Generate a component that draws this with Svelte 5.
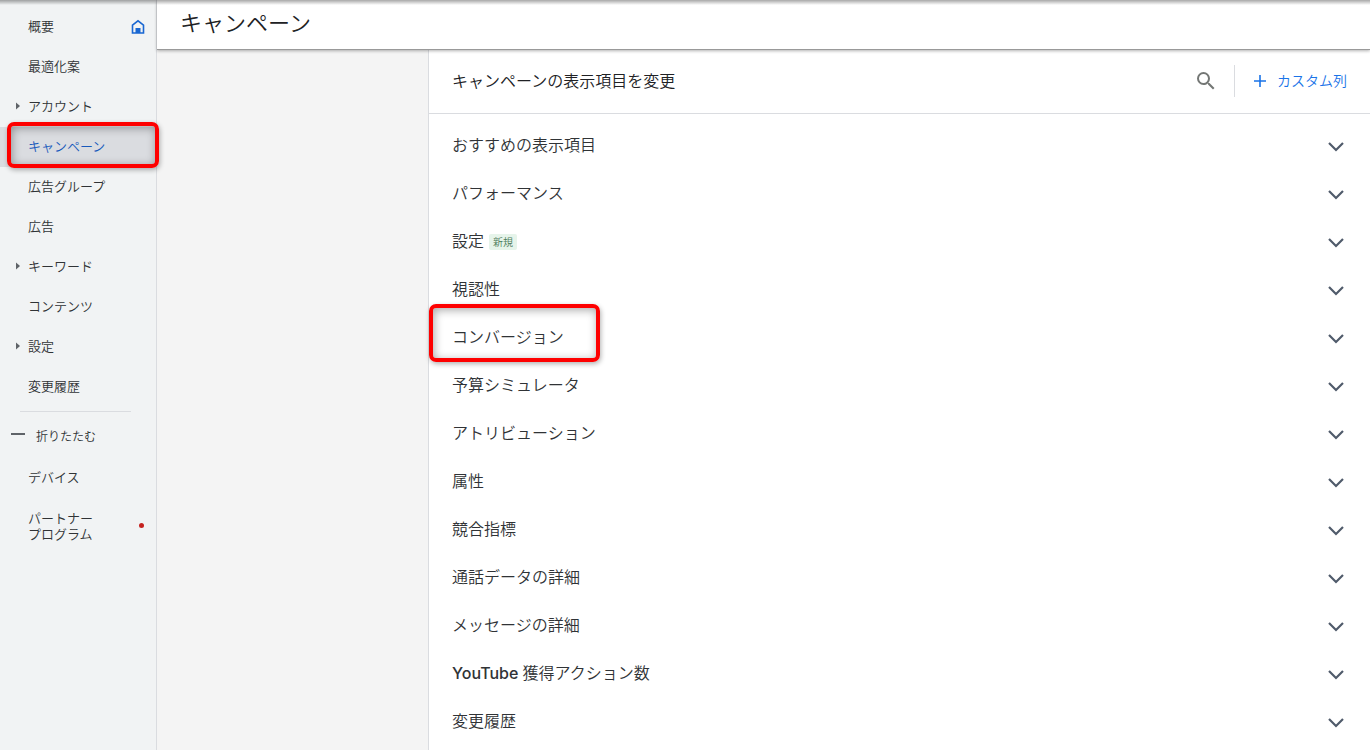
<script>
	let selectedItem = $state('キャンペーン');
	let openGroup = $state(null);

	const navItems = [
		{ label: '概要', home: true },
		{ label: '最適化案' },
		{ label: 'アカウント', expandable: true },
		{ label: 'キャンペーン', marked: true },
		{ label: '広告グループ' },
		{ label: '広告' },
		{ label: 'キーワード', expandable: true },
		{ label: 'コンテンツ' },
		{ label: '設定', expandable: true },
		{ label: '変更履歴' }
	];

	const columnGroups = [
		{ label: 'おすすめの表示項目' },
		{ label: 'パフォーマンス' },
		{ label: '設定', badge: '新規' },
		{ label: '視認性' },
		{ label: 'コンバージョン', marked: true },
		{ label: '予算シミュレータ' },
		{ label: 'アトリビューション' },
		{ label: '属性' },
		{ label: '競合指標' },
		{ label: '通話データの詳細' },
		{ label: 'メッセージの詳細' },
		{ label: '獲得アクション数', brand: 'YouTube' },
		{ label: '変更履歴' }
	];

	function toggleGroup(index) {
		openGroup = openGroup === index ? null : index;
	}
</script>

<div class="app">
	<nav class="sidebar">
		{#each navItems as item}
			<a
				class="nav-item"
				class:active={selectedItem === item.label}
				href="#{item.label}"
				onclick={() => (selectedItem = item.label)}
			>
				<span class="arrow-slot">
					{#if item.expandable}
						<svg width="4" height="8" viewBox="0 0 4 8"><path d="M0 0.5 4 4 0 7.5z" /></svg>
					{/if}
				</span>
				<span class="nav-label">{item.label}</span>
				{#if item.home}
					<svg class="home" width="14" height="16" viewBox="0 0 14 16">
						<path
							d="M1.5 6.2 7 1.8l5.5 4.4V14h-11z"
							fill="none"
							stroke="#1967d2"
							stroke-width="1.6"
						/>
						<path d="M4.500 9h5v5h-5z" fill="#1967d2" />
					</svg>
				{/if}
				{#if item.marked}<span class="marker"></span>{/if}
			</a>
		{/each}
		<hr />
		<button class="collapse">
			<span class="dash"></span>
			折りたたむ
		</button>
		<a class="nav-item sub" href="#device"><span class="nav-label">デバイス</span></a>
		<a class="nav-item sub partner" href="#partner">
			<span class="nav-label">パートナー<br />プログラム</span>
			<span class="dot"></span>
		</a>
	</nav>

	<main>
		<header>
			<h1>キャンペーン</h1>
		</header>
		<div class="content">
			<div class="gutter"></div>
			<section class="panel">
				<div class="panel-head">
					<h2>キャンペーンの表示項目を変更</h2>
					<button class="search" aria-label="検索">
						<svg width="24" height="24" viewBox="0 0 24 24">
							<path
								d="M15.5 14h-.79l-.28-.27A6.47 6.47 0 0 0 16 9.5 6.5 6.5 0 1 0 9.5 16c1.61 0 3.09-.59 4.23-1.57l.27.28v.79l5 4.99L20.49 19l-4.99-5zm-6 0C7.01 14 5 11.99 5 9.5S7.01 5 9.5 5 14 7.01 14 9.5 11.99 14 9.5 14z"
								fill="#747775"
							/>
						</svg>
					</button>
					<button class="custom">
						<svg width="12" height="12" viewBox="0 0 12 12">
							<path d="M6 0v12M0 6h12" stroke="#1a73e8" stroke-width="1.6" />
						</svg>
						カスタム列
					</button>
				</div>
				<div class="groups">
					{#each columnGroups as group, i}
						<button class="group" aria-expanded={openGroup === i} onclick={() => toggleGroup(i)}>
							<span class="group-label">
								{#if group.brand}<span class="brand">{group.brand}</span>{/if}
								{group.label}
							</span>
							{#if group.badge}<span class="badge">{group.badge}</span>{/if}
							<svg class="chevron" width="18" height="12" viewBox="0 0 18 12">
								<path d="M2 3l7 7 7-7" fill="none" stroke="#505b6b" stroke-width="2.2" />
							</svg>
							{#if group.marked}<span class="marker"></span>{/if}
						</button>
					{/each}
				</div>
			</section>
		</div>
	</main>
</div>

<style>
	:global(body) {
		margin: 0;
		overflow: hidden;
	}

	.app {
		position: relative;
		display: flex;
		height: 100vh;
		overflow: hidden;
		background: #f4f4f4;
		color: #303336;
		font-family: 'Noto Sans', 'Noto Sans CJK JP', sans-serif;
		font-weight: 350;
	}

	/* shadow cast by the bar above the page */
	.app::before {
		content: '';
		position: absolute;
		top: 0;
		left: 0;
		right: 0;
		height: 5px;
		background: linear-gradient(rgba(0, 0, 0, 0.34), rgba(0, 0, 0, 0));
		z-index: 3;
		pointer-events: none;
	}

	button {
		border: none;
		background: none;
		padding: 0;
		margin: 0;
		color: inherit;
		font: inherit;
		cursor: pointer;
	}

	.sidebar {
		width: 156px;
		flex-shrink: 0;
		padding-top: 7px;
		background: #f1f3f4;
		border-right: 1px solid #dadce0;
		font-size: 13px;
		line-height: 16px;
	}

	.nav-item {
		position: relative;
		display: flex;
		align-items: center;
		height: 40px;
		padding-right: 11px;
		color: inherit;
		text-decoration: none;
	}

	.nav-item.active {
		background: #dadce0;
		color: #185abc;
	}

	.arrow-slot {
		display: flex;
		width: 12px;
		padding-left: 16px;
		padding-bottom: 2px;
		fill: #5f6368;
	}

	.nav-label {
		flex: 1;
		padding-bottom: 2px;
	}

	hr {
		height: 1px;
		margin: 4px 25px 4px 20px;
		border: none;
		background: #dadce0;
	}

	.collapse {
		display: flex;
		align-items: center;
		gap: 11px;
		width: 100%;
		height: 41px;
		padding-left: 11px;
		font-size: 12px;
	}

	.dash {
		width: 14px;
		height: 2px;
		margin-bottom: 5px;
		background: #5f6368;
	}

	.sub {
		padding-left: 28px;
		padding-right: 12px;
	}

	.sub .nav-label {
		padding-bottom: 0;
	}

	.partner {
		height: 57px;
	}

	.dot {
		width: 5px;
		height: 5px;
		border-radius: 50%;
		background: #c5221f;
	}

	.marker {
		position: absolute;
		z-index: 2;
		box-sizing: border-box;
		border: 4px solid #fe0000;
		border-radius: 7px;
		box-shadow:
			1px 2px 5px rgba(0, 0, 0, 0.3),
			inset 1px 2px 10px rgba(0, 0, 0, 0.35);
		pointer-events: none;
	}

	.nav-item .marker {
		inset: -5px -3px -1px 7px;
	}

	.group .marker {
		top: -10px;
		bottom: 0;
		left: 0;
		width: 171px;
	}

	main {
		flex: 1;
		min-width: 0;
		display: flex;
		flex-direction: column;
	}

	header {
		position: relative;
		z-index: 1;
		display: flex;
		align-items: center;
		height: 49px;
		flex-shrink: 0;
		padding-left: 23px;
		background: #fff;
		box-shadow:
			0 1px 0 #999,
			0 2px 3px rgba(0, 0, 0, 0.3);
	}

	h1 {
		margin: 0;
		padding-bottom: 6px;
		color: #202124;
		font-size: 22px;
		line-height: 28px;
		font-weight: 350;
	}

	.content {
		flex: 1;
		min-height: 0;
		display: flex;
	}

	.gutter {
		width: 271px;
		flex-shrink: 0;
	}

	.panel {
		flex: 1;
		min-width: 0;
		background: #fff;
		border-left: 1px solid #dadce0;
	}

	.panel-head {
		display: flex;
		align-items: center;
		height: 64px;
		padding: 0 23px;
		border-bottom: 1px solid #dadce0;
	}

	h2 {
		flex: 1;
		margin: 0;
		color: #202124;
		font-size: 16px;
		line-height: 24px;
		font-weight: 350;
	}

	.search {
		display: flex;
		padding-right: 16px;
	}

	.custom {
		display: flex;
		align-items: center;
		gap: 11px;
		height: 32px;
		padding-left: 19px;
		border-left: 1px solid #dadce0;
		color: #1a73e8;
		font-size: 14px;
		line-height: 20px;
	}

	.groups {
		padding-top: 8px;
	}

	.group {
		position: relative;
		display: flex;
		align-items: center;
		gap: 5px;
		width: 100%;
		height: 48px;
		padding: 0 25px 0 23px;
		font-size: 16px;
		line-height: 24px;
		text-align: left;
	}

	.group-label {
		padding-bottom: 2px;
	}

	.brand {
		font-family: Inter, sans-serif;
		font-weight: 500;
	}

	.badge {
		padding: 0 4px;
		border-radius: 2px;
		background: #e6f4ea;
		color: #4a7a5a;
		font-size: 10px;
		line-height: 16px;
	}

	.chevron {
		margin-left: auto;
	}
</style>
